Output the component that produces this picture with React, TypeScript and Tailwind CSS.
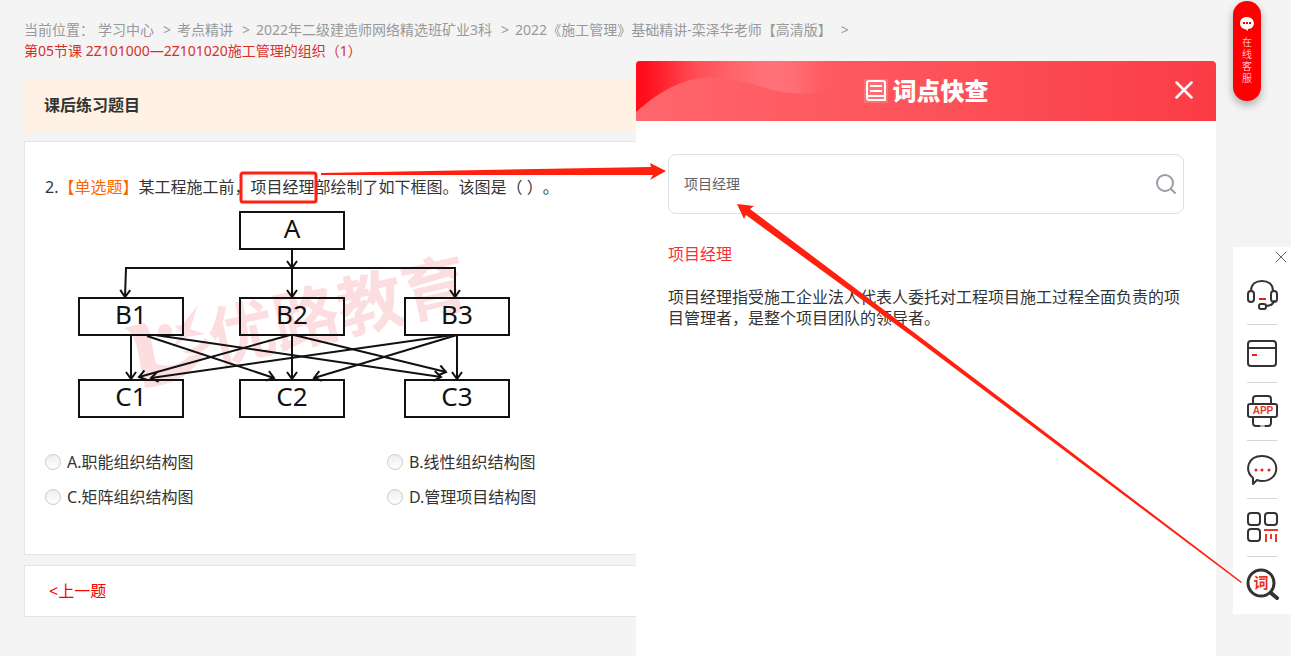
import React from 'react';
import { X } from 'lucide-react';

const CRUMBS = ['学习中心', '考点精讲', '2022年二级建造师网络精选班矿业3科', '2022《施工管理》基础精讲-栾泽华老师【高清版】'];

const OPTIONS = [
  { id: 'A', label: '职能组织结构图' },
  { id: 'B', label: '线性组织结构图' },
  { id: 'C', label: '矩阵组织结构图' },
  { id: 'D', label: '管理项目结构图' },
];

const NODES = [
  { label: 'A', x: 163, y: 2 },
  { label: 'B1', x: 2, y: 88 },
  { label: 'B2', x: 163, y: 88 },
  { label: 'B3', x: 328, y: 88 },
  { label: 'C1', x: 2, y: 170 },
  { label: 'C2', x: 163, y: 170 },
  { label: 'C3', x: 328, y: 170 },
];

const EDGES = [
  'M215 39V58',
  'M215 58H49L48 87',
  'M215 58V87',
  'M215 58H378V87',
  'M54 125V169',
  'M70 126L197 168',
  'M78 125L364 167',
  'M213 125L62 167',
  'M215 125V169',
  'M217 125L369 162',
  'M376 125L74 168',
  'M380 125L237 168',
  'M380 125V169',
];

const OrgChart = () => (
  <svg className="ml-8 block" width="437" height="211" viewBox="0 0 437 211" role="img" aria-label="组织结构框图">
    <defs>
      <marker id="tip" markerWidth="10" markerHeight="14" refX="8" refY="7" orient="auto" markerUnits="userSpaceOnUse">
        <path d="M1 2L8 7L1 12" fill="none" stroke="#111" strokeWidth="2" />
      </marker>
    </defs>
    {/* Watermark */}
    <g fill="#e60012" fillOpacity="0.13">
      <path d="M47 118L66 113Q71 114 73 124L79 154Q98 160 112 146L128 142Q112 174 68 178L61 142Q57 122 47 118Z" />
      <circle cx="88" cy="121" r="7" />
      <path d="M121 95L105 115L98 116L104 123L96 138L110 127L128 124L113 119Z" />
      <path d="M128 128Q120 139 105 142Q122 148 134 134Z" />
      <text x="138" y="154" fontSize="66" fontWeight="700" transform="rotate(-13 138 154)">优路教育</text>
    </g>
    {EDGES.map((d) => (
      <path key={d} d={d} fill="none" stroke="#111" strokeWidth="2" markerEnd="url(#tip)" />
    ))}
    {NODES.map((node) => (
      <g key={node.label}>
        <rect x={node.x} y={node.y} width="104" height="37" fill="none" stroke="#111" strokeWidth="2" />
        <text x={node.x + 52} y={node.y + 26} textAnchor="middle" fontSize="26" fill="#111">
          {node.label}
        </text>
      </g>
    ))}
  </svg>
);

const stroke = { fill: 'none', stroke: '#333', strokeWidth: 3, strokeLinecap: 'round', strokeLinejoin: 'round' } as const;

const TOOLS = [
  {
    label: '客服',
    icon: (
      <g {...stroke} strokeWidth="2">
        <path d="M4 12C4 5 9 2 15 2s11 3 11 10M27 22c-1 4-4 5-8 5" />
        <rect x="1" y="12" width="6" height="11" rx="3" />
        <rect x="24" y="12" width="6" height="11" rx="3" />
        <rect x="12" y="25" width="7" height="5" rx="2" />
        <path d="M12 20h7" stroke="#f02010" strokeLinecap="butt" />
      </g>
    ),
  },
  {
    label: '课程',
    icon: (
      <g {...stroke} strokeWidth="2">
        <rect x="1" y="4" width="28" height="25" rx="3" />
        <path d="M1 11h28" />
        <path d="M5 18h5" stroke="#f02010" strokeLinecap="butt" />
      </g>
    ),
  },
  {
    label: '下载',
    icon: (
      <g {...stroke} strokeWidth="2">
        <path d="M6 9V4q0-3 3-3h12q3 0 3 3v5M6 23v5q0 3 3 3h12q3 0 3-3v-5" />
        <rect x="1" y="9" width="29" height="13" rx="2" />
        <path d="M14 31h3" stroke="#bbb" />
        <text x="16" y="19" textAnchor="middle" fontSize="10" fontWeight="700" fill="#e8392b" stroke="none" className="font-['Liberation_Sans',sans-serif]">
          APP
        </text>
      </g>
    ),
  },
  {
    label: '咨询',
    icon: (
      <g {...stroke} strokeWidth="2">
        <path d="M6 25C-3 17 1 3 15 3c19 0 19 25 0 25-2 0-3 0-5-1l-4 4Z" />
        <path d="M9 17h0M15 17h0M22 17h0" stroke="#f02010" strokeWidth="3" />
      </g>
    ),
  },
  {
    label: '扫码',
    icon: (
      <g {...stroke} strokeWidth="2">
        <rect x="1" y="2" width="12" height="12" rx="3" />
        <rect x="18" y="2" width="12" height="12" rx="3" />
        <rect x="1" y="18" width="12" height="12" rx="3" />
        <path d="M17 19h14M19 23v8M24 23v5M29 23v8" stroke="#e8392b" strokeLinecap="butt" />
      </g>
    ),
  },
  {
    label: '词点快查',
    icon: (
      <g {...stroke}>
        <circle cx="14" cy="13" r="13" />
        <path d="M24 23l6 5" strokeWidth="4" />
        <text x="14" y="18" textAnchor="middle" fontSize="15" fontWeight="700" fill="#e8301f" stroke="none">
          词
        </text>
      </g>
    ),
  },
];

const Breadcrumb = () => (
  <nav aria-label="当前位置" className="h-[61px] pt-[19px] pl-6 text-sm leading-[21px] text-[#999] whitespace-nowrap">
    <div className="flex">
      <span className="mr-1">当前位置：</span>
      {CRUMBS.map((crumb) => (
        <React.Fragment key={crumb}>
          <a href="#" className="mr-[9px]">{crumb}</a>
          <span className="mr-[6px]">&gt;</span>
        </React.Fragment>
      ))}
    </div>
    <p className="text-[#d9302c]">第05节课 2Z101000—2Z101020施工管理的组织（1）</p>
  </nav>
);

const Question = () => (
  <main className="min-w-0 flex-1 pt-[19px] pl-6">
    <h1 className="h-[52px] bg-[#fff2e4] px-5 text-base leading-[50px] font-bold text-[#333]">课后练习题目</h1>

    <div className="mt-[9px] border border-r-0 border-[#e5e5e5] bg-white px-5 pt-[33px] pb-10 text-base text-[#333]">
      <p className="mb-[11px] leading-6 whitespace-nowrap">
        2.<span className="text-[#ff6600]">【单选题】</span>某工程施工前，项目经理部绘制了如下框图。该图是（ ）。
      </p>
      <OrgChart />
      <div role="radiogroup" aria-label="选项" className="mt-[23px] grid grid-cols-[342px_1fr] whitespace-nowrap">
        {OPTIONS.map((opt) => (
          <label key={opt.id} className="flex h-[35px] items-center gap-[6px]">
            <input
              type="radio"
              name="answer"
              className="size-4 shrink-0 appearance-none rounded-full border border-[#ccc] bg-linear-to-b from-[#eee] to-white checked:border-[#f60]"
            />
            <span>{opt.id}.{opt.label}</span>
          </label>
        ))}
      </div>
    </div>

    <div className="mt-[10px] border border-r-0 border-[#e5e5e5] bg-white px-6 py-[13px]">
      <button type="button" className="block text-base leading-6 text-[#f00]">&lt;上一题</button>
    </div>
  </main>
);

const LookupPanel = () => (
  <aside className="w-[580px] shrink-0 bg-white">
    <header className="relative flex h-[60px] items-center justify-center overflow-hidden rounded-t bg-linear-to-r from-[#ff666d] to-[#fa3b45] text-white">
      <svg className="absolute top-0 left-0" width="200" height="60" viewBox="0 0 200 60" aria-hidden="true">
        <defs>
          <linearGradient id="wave">
            <stop offset="0.04" stopColor="#ff0d1a" />
            <stop offset="0.3" stopColor="#ff4d56" />
            <stop offset="0.5" stopColor="#ff666d" />
            <stop offset="0.66" stopColor="#ff7279" />
            <stop offset="0.8" stopColor="#ff6d74" />
            <stop offset="1" stopColor="#ff5d65" stopOpacity="0" />
          </linearGradient>
        </defs>
        <path d="M0 0H200V28C175 36 145 33 120 24C70 9 40 16 0 51Z" fill="url(#wave)" />
      </svg>
      <h2 className="relative flex items-center gap-[5px] text-2xl font-black">
        <svg width="24" height="24" viewBox="0 0 24 24" fill="none" stroke="#fff" strokeWidth="2" aria-hidden="true">
          <rect width="24" height="24" fill="#fff" fillOpacity="0.15" stroke="none" />
          <path d="M21 17V4q0-2-2-2H5Q3 2 3 4v15q0 2 2 2h17M21 17H5q-2 0-2 2M21 17v4" />
          <path d="M6 7h12M6 12h12" />
        </svg>
        词点快查
      </h2>
      <button type="button" aria-label="关闭" className="absolute top-[14px] right-[17px]">
        <X size={30} strokeWidth={2} />
      </button>
    </header>

    <div className="px-8 pt-[33px] text-base leading-[21px] text-[#333]">
      <div className="flex h-[60px] items-center rounded-lg border border-[#dcdfe6] pr-[5px] pl-[15px]">
        <input
          type="text"
          aria-label="搜索词点"
          defaultValue="项目经理"
          className="min-w-0 flex-1 text-sm text-[#606266] outline-none"
        />
        <button type="button" aria-label="搜索">
          <svg width="24" height="24" viewBox="0 0 24 24" fill="none" stroke="#9a9da5" strokeWidth="2" strokeLinecap="round">
            <circle cx="11" cy="11" r="8" />
            <path d="M17 17l4 4" />
          </svg>
        </button>
      </div>
      <h3 className="mt-[30px] text-[#f9303c]">项目经理</h3>
      <p className="mt-[22px]">
        项目经理指受施工企业法人代表人委托对工程项目施工过程全面负责的项目管理者，是整个项目团队的领导者。
      </p>
    </div>
  </aside>
);

const SideTools = () => (
  <div className="w-[75px] shrink-0 pt-px pl-[17px]">
    <button type="button" className="flex h-[100px] w-7 flex-col items-center rounded-full bg-[#f00] pt-4 text-white shadow-[0_4px_8px_rgba(0,0,0,0.3)]">
      <svg width="14" height="14" viewBox="0 0 14 14" aria-hidden="true">
        <path d="M7 0c9 0 9 12 1 12v2l-3-2C-2 11-2 0 7 0Z" fill="#fff" />
        <path d="M3 6h2M6 6h2M9 6h2" stroke="#f00" strokeWidth="2" />
      </svg>
      <span className="mt-[5px] w-[10px] text-[10px] leading-[12px] font-light break-all">在线客服</span>
    </button>

    <div className="mt-[146px] h-[367px] bg-white">
      <button type="button" aria-label="收起" className="ml-auto flex size-5 items-center justify-center text-[#444]">
        <X size={20} strokeWidth={1} />
      </button>
      <ul className="px-[14px]">
        {TOOLS.map((tool) => (
          <li key={tool.label} className="h-[58px] border-b border-[#d5d5d5] last:border-b-0">
            <button type="button" aria-label={tool.label} className="flex h-full w-full items-center">
              <svg className="shrink-0 overflow-visible" width="33" height="33" viewBox="0 0 33 33">{tool.icon}</svg>
            </button>
          </li>
        ))}
      </ul>
    </div>
  </div>
);

// Red marks that tie the word in the question to the lookup panel
const Annotations = () => (
  <svg className="pointer-events-none absolute top-0 left-0" width="1291" height="656" viewBox="0 0 1291 656" fill="#ff2010" aria-hidden="true">
    <rect x="241" y="173" width="75" height="29" rx="2" fill="none" stroke="#ff2010" strokeWidth="3" />
    <path d="M321 173L651 167L650 163L666 171L650 180L653 175L321 175Z" />
    <path d="M737 204L754 206L750 209L924 340L1242 582L1241 583L917 340L746 215L744 219Z" />
  </svg>
);

export default function App() {
  return (
    <div className="relative flex min-h-screen overflow-hidden bg-[#f4f4f4] font-['Noto_Sans','Noto_Sans_CJK_SC',sans-serif] [text-spacing-trim:space-all]">
      <div className="flex min-w-0 flex-1 flex-col">
        <Breadcrumb />
        <div className="flex flex-1">
          <Question />
          <LookupPanel />
        </div>
      </div>
      <SideTools />
      <Annotations />
    </div>
  );
}
